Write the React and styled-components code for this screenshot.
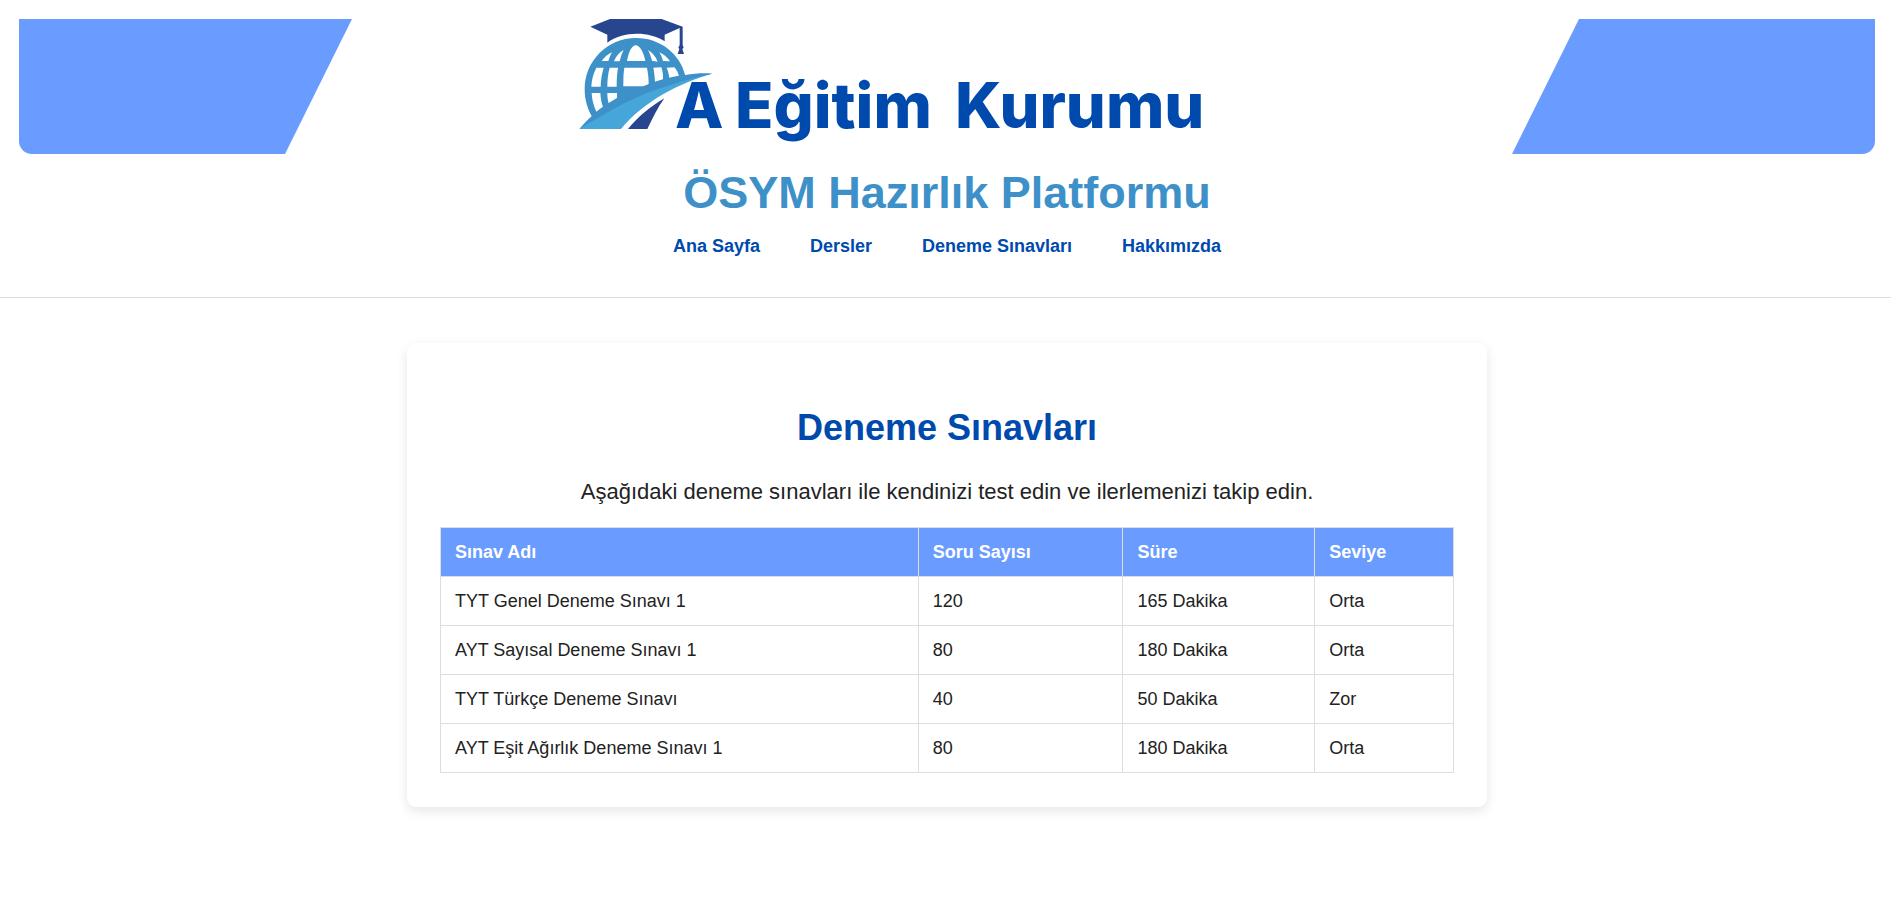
import React from "react";
import styled, { createGlobalStyle } from "styled-components";

const GlobalStyle = createGlobalStyle`
  * { box-sizing: border-box; }
  body {
    margin: 0;
    background: #ffffff;
    color: #222222;
    font-family: "Liberation Sans", Arial, sans-serif;
    font-size: 18px;
    line-height: 20px;
  }
`;

const Header = styled.header`
  padding: 19px 16px 41px 19px;
  border-bottom: 1px solid #dddddd;
  text-align: center;
`;

const Banner = styled.div`
  display: flex;
  justify-content: space-between;
  height: 135px;
`;

const BannerWing = styled.div`
  flex: 0 0 ${({ $side }) => ($side === "left" ? "333px" : "363px")};
  background: #6a9cff;
  border-radius: ${({ $side }) => ($side === "left" ? "0 0 0 13px" : "0 0 13px 0")};
  clip-path: ${({ $side }) =>
    $side === "left"
      ? "polygon(0 0, 100% 0, calc(100% - 67px) 100%, 0 100%)"
      : "polygon(67px 0, 100% 0, 100% 100%, 0 100%)"};
`;

const LogoDrawing = styled.svg`
  flex: 0 0 706px;
  height: 135px;
`;

const LogoText = styled.text`
  fill: #004aad;
  font-family: Inter, "Open Sans", sans-serif;
  font-size: 63px;
  font-weight: 800;
`;

const SiteTitle = styled.h1`
  margin: 14px 0 18px;
  color: #3d91c8;
  font-size: 45px;
  line-height: 50px;
`;

const Nav = styled.nav`
  display: flex;
  justify-content: center;
  gap: 50px;
`;

const NavLink = styled.a`
  color: #004aad;
  font-weight: 700;
  text-decoration: none;
`;

const Main = styled.main`
  padding: 45px 0 45px 3px;
`;

const Card = styled.section`
  max-width: 1080px;
  margin: 0 auto;
  padding: 34px 33px;
  border-radius: 9px;
  background: #ffffff;
  box-shadow: 0 4px 12px rgba(0, 0, 0, 0.1);
  text-align: center;
`;

const CardTitle = styled.h2`
  margin: 31px 0 31px;
  color: #004aad;
  font-size: 36px;
  line-height: 40px;
`;

const Intro = styled.p`
  margin: 0 0 22px;
  font-size: 22px;
  line-height: 26px;
`;

const Table = styled.table`
  width: 100%;
  border-collapse: collapse;
  text-align: left;
`;

const HeadCell = styled.th`
  padding: 14px;
  border: 1px solid #dddddd;
  background: #6a9cff;
  color: #ffffff;
`;

const Cell = styled.td`
  padding: 14px;
  border: 1px solid #dddddd;
`;

const links = ["Ana Sayfa", "Dersler", "Deneme Sınavları", "Hakkımızda"];
const columns = ["Sınav Adı", "Soru Sayısı", "Süre", "Seviye"];
const exams = [
  ["TYT Genel Deneme Sınavı 1", "120", "165 Dakika", "Orta"],
  ["AYT Sayısal Deneme Sınavı 1", "80", "180 Dakika", "Orta"],
  ["TYT Türkçe Deneme Sınavı", "40", "50 Dakika", "Zor"],
  ["AYT Eşit Ağırlık Deneme Sınavı 1", "80", "180 Dakika", "Orta"],
];

function Logo() {
  return (
    <LogoDrawing viewBox="0 0 706 135" role="img" aria-label="A Eğitim Kurumu">
      <g transform="translate(-19 -19) scale(0.33333)">
        {/* globe */}
        <path
          fill="#3d91c8"
          d="M97 352C82 327 74 298 74 268C74 183 142 114 228 114C301 114 361 162 376 228L300 260L170 330Z"
        />
        <g fill="#ffffff">
          <path d="M201 183C206 155 216 136 227 136C239 136 250 155 256 183Z" />
          <path d="M162 184C168 169 177 157 191 150C186 160 182 171 179 184Z" />
          <path d="M125 183C132 173 143 163 156 157C151 166 148 174 145 183Z" />
          <path d="M264 150C278 158 287 170 293 185L276 182C273 170 269 159 264 150Z" />
          <path d="M298 157C312 163 322 172 330 184L309 183C306 173 303 165 298 157Z" />
          <path d="M109 203H131C126 221 122 240 122 260H94C95 239 100 220 109 203Z" />
          <path d="M149 203H174C171 221 170 240 170 260H142C142 240 144 221 149 203Z" />
          <path d="M193 203H261C264 219 266 235 266 252L250 259H190C190 239 190 221 193 203Z" />
          <path d="M280 203L304 202C308 214 310 226 309 238L285 245C284 231 283 217 280 203Z" />
          <path d="M320 203L343 202C350 210 355 219 357 229L328 234C327 223 324 213 320 203Z" />
          <path d="M95 279H121C122 294 124 308 129 321L109 335C101 318 96 299 95 279Z" />
          <path d="M142 279H171V298L146 311C143 300 142 290 142 279Z" />
        </g>
        {/* graduation cap */}
        <path
          fill="#27468f"
          d="M150 57H305L368 80V135L371 143L367 147L372 162H353L358 147L355 143L359 135V84L314 104V124C268 94 188 93 142 128V104L91 80Z"
        />
        {/* road */}
        <path
          fill="#46a6da"
          d="M58 387C120 330 220 270 376 229C400 223 432 221 457 221C360 248 251 303 183 387Z"
        />
        <path
          fill="#3d91c8"
          d="M58 387C108 325 175 285 250 260C300 239 350 226 376 225C405 220 432 219 457 221C410 230 370 242 330 256C230 283 140 338 58 387Z"
        />
        <path fill="#27468f" d="M204 387C234 350 270 321 313 295C294 322 277 355 262 387Z" />
      </g>
      <LogoText x="96" y="109">A</LogoText>
      <LogoText x="156" y="109">Eğitim</LogoText>
      <LogoText x="376" y="109">Kurumu</LogoText>
    </LogoDrawing>
  );
}

export default function App() {
  return (
    <>
      <GlobalStyle />
      <Header>
        <Banner>
          <BannerWing $side="left" />
          <Logo />
          <BannerWing $side="right" />
        </Banner>
        <SiteTitle>ÖSYM Hazırlık Platformu</SiteTitle>
        <Nav>
          {links.map((label) => (
            <NavLink key={label} href="#">
              {label}
            </NavLink>
          ))}
        </Nav>
      </Header>
      <Main>
        <Card>
          <CardTitle>Deneme Sınavları</CardTitle>
          <Intro>Aşağıdaki deneme sınavları ile kendinizi test edin ve ilerlemenizi takip edin.</Intro>
          <Table>
            <thead>
              <tr>
                {columns.map((name) => (
                  <HeadCell key={name} scope="col">
                    {name}
                  </HeadCell>
                ))}
              </tr>
            </thead>
            <tbody>
              {exams.map((exam) => (
                <tr key={exam[0]}>
                  {exam.map((value, i) => (
                    <Cell key={columns[i]}>{value}</Cell>
                  ))}
                </tr>
              ))}
            </tbody>
          </Table>
        </Card>
      </Main>
    </>
  );
}
